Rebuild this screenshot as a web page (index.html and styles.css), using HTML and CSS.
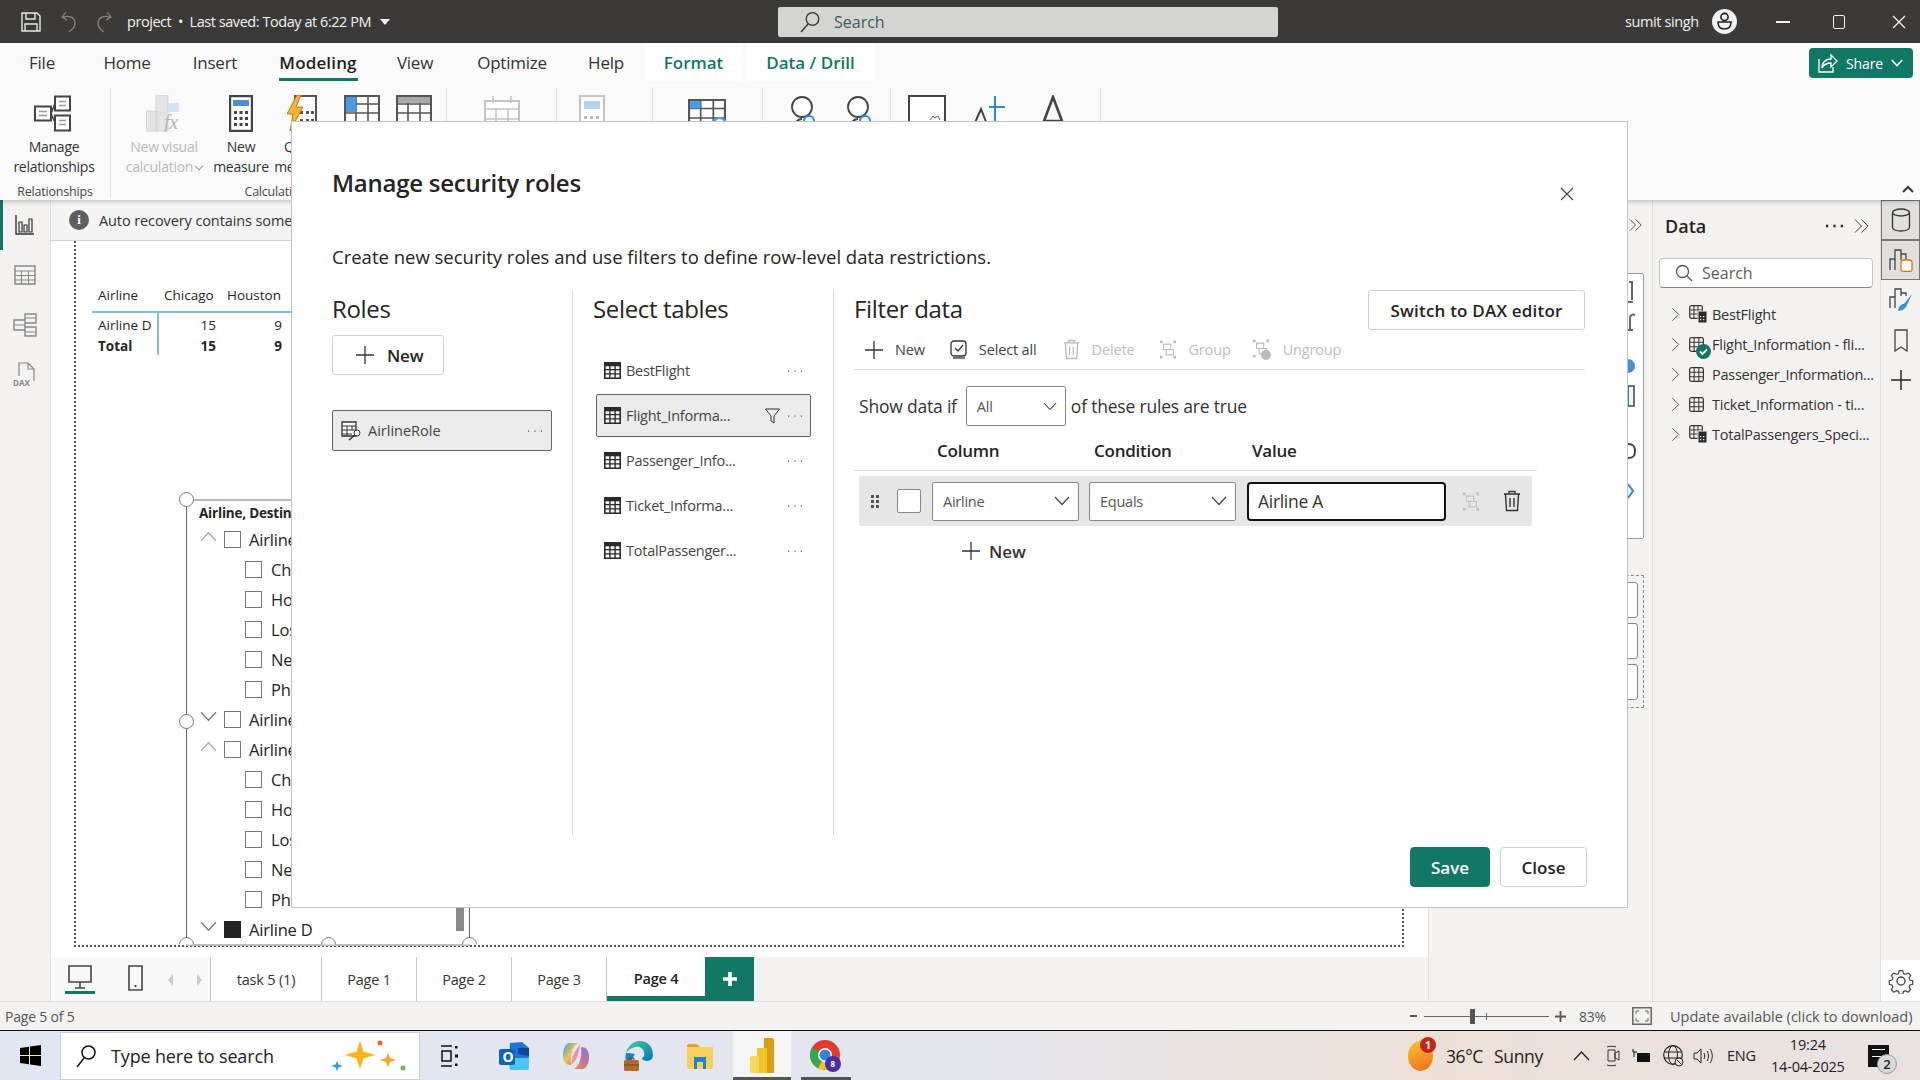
FILE: index.html
```html
<!DOCTYPE html>
<html>
<head lang="en">
    <meta charset="UTF-8">
    <title>project</title>
    <link rel="stylesheet" href="styles.css">
</head>
<body>
<svg class="defs" width="0" height="0">
    <symbol id="grid" viewBox="0 0 16 16"><path d="M0 0h16v16H0z" fill="#2b2b2b"/><path d="M1.500 4h3.400v2.600H1.500zM6.200 4h3.600v2.600H6.200zM11.100 4h3.400v2.600h-3.400zM1.500 7.800h3.400v2.800H1.500zM6.200 7.800h3.600v2.800H6.200zM11.100 7.800h3.400v2.800h-3.400zM1.500 11.800h3.400v2.700H1.500zM6.200 11.800h3.600v2.700H6.200zM11.100 11.800h3.400v2.700h-3.400z" fill="#f4f4f4"/></symbol>
    <symbol id="dots" viewBox="0 0 16 4"><path d="M1 1.500h1.200v1.200H1zM7.400 1.500h1.200v1.200H7.400zM13.800 1.500H15v1.200h-1.200z" fill="#555"/></symbol>
    <symbol id="dots2" viewBox="0 0 20 4"><path d="M1 .8h2.400v2.400H1zM8.800 .8h2.400v2.400H8.800zM16.600 .8H19v2.400h-2.400z" fill="#222"/></symbol>
    <symbol id="chev" viewBox="0 0 16 10"><path d="M1 1l7 7.500L15 1" fill="none" stroke="currentColor" stroke-width="1.200"/></symbol>
    <symbol id="chevr" viewBox="0 0 10 16"><path d="M1.500 1l7 7-7 7" fill="none" stroke="#444" stroke-width="1"/></symbol>
    <symbol id="plus" viewBox="0 0 20 20"><path d="M10 1v18M1 10h18" fill="none" stroke="currentColor" stroke-width="1.300"/></symbol>
    <symbol id="trash" viewBox="0 0 20 22"><path d="M2 4h16M7 4V1.500h6V4M3.500 4l1 16.500h11l1-16.500M8 8v9M12 8v9" fill="none" stroke="currentColor" stroke-width="1.400"/></symbol>
    <symbol id="group" viewBox="0 0 20 22"><path d="M1 1h3v3H1zM16 1h3v3h-3zM1 18h3v3H1zM16 18h3v3h-3z" fill="currentColor"/><path d="M5 5h8v6H5zM8 11h8v6H8z" fill="none" stroke="currentColor" stroke-width="1.200"/></symbol>
    <symbol id="tree" viewBox="0 0 16 16"><rect x=".7" y=".7" width="14.600" height="14.600" rx="2" fill="none" stroke="#333" stroke-width="1.300"/><path d="M5.500 1v14M10.500 1v14M1 5.500h14M1 10.500h14" stroke="#333" stroke-width="1.100"/></symbol>
    <symbol id="treecalc" viewBox="0 0 18 18"><rect x=".7" y=".7" width="12.600" height="12.600" rx="2" fill="none" stroke="#333" stroke-width="1.200"/><path d="M5 1v12M9 1v12M1 5h12M1 9h12" stroke="#333" stroke-width="1"/><rect x="9" y="6" width="9" height="12" fill="#2b2b2b" stroke="#f3f2f1"/><path d="M11 11h1.300v1.300H11zM14 11h1.300v1.300H14zM11 14h1.300v1.300H11zM14 14h1.300v1.300H14z" fill="#f3f2f1"/></symbol>
    <symbol id="double" viewBox="0 0 16 16"><path d="M1 1l7 7-7 7M8 1l7 7-7 7" fill="none" stroke="#333" stroke-width="1"/></symbol>
    <symbol id="tbl" viewBox="0 0 36 36"><path d="M1 1h34v34H1z" fill="#fff" stroke="#555" stroke-width="2"/><path d="M1 9h34M1 18h34M1 27h34M12 1v34M24 1v34" stroke="#555" stroke-width="1.600"/></symbol>
</svg>

<div class="app">
    <div class="titlebar">
        <div class="title-left">
            <svg class="save-ico" width="20" height="20" viewBox="0 0 20 20"><path d="M1 1h15l3 3v15H1z" fill="none" stroke="#e8e8e8" stroke-width="1.400"/><path d="M5 1v6h9V1M4 19v-7h12v7" fill="none" stroke="#e8e8e8" stroke-width="1.400"/></svg>
            <svg class="undo-ico" width="15" height="22" viewBox="0 0 15 22"><path d="M5 1L1 6l5 3M2 6c7-2 12 1 12 6 0 4-3 7-6 9" fill="none" stroke="#8a8987" stroke-width="1.200"/></svg>
            <svg class="redo-ico" width="15" height="22" viewBox="0 0 15 22"><path d="M10 1l4 5-5 3M13 6C6 4 1 7 1 12c0 4 3 7 6 9" fill="none" stroke="#8a8987" stroke-width="1.200"/></svg>
            <span class="doc-name">project &nbsp;•&nbsp; Last saved: Today at 6:22 PM</span>
            <span class="doc-caret"></span>
        </div>
        <div class="title-search">
            <svg width="20" height="22" viewBox="0 0 20 22"><circle cx="12.500" cy="8" r="6.300" fill="none" stroke="#333" stroke-width="1.300"/><path d="M8 13l-7 8" stroke="#333" stroke-width="1.400"/></svg>
            <span>Search</span>
        </div>
        <div class="title-right">
            <span class="user-name">sumit singh</span>
            <svg class="avatar" width="25" height="25" viewBox="0 0 25 25"><circle cx="12.500" cy="12.500" r="12.500" fill="#f2f2f2"/><circle cx="12.500" cy="8" r="3.600" fill="none" stroke="#222" stroke-width="1.600"/><path d="M6 13h13c0 5-3 7-6.500 7S6 18 6 13z" fill="none" stroke="#222" stroke-width="1.600"/></svg>
            <span class="win-min"></span>
            <span class="win-max"></span>
            <svg class="win-close" width="14" height="14" viewBox="0 0 14 14"><path d="M1 1l12 12M13 1L1 13" stroke="#f2f2f2" stroke-width="1.300"/></svg>
        </div>
    </div>

    <div class="ribbon">
        <div class="tabs">
            <span class="tab">File</span>
            <span class="tab">Home</span>
            <span class="tab">Insert</span>
            <span class="tab tab-on">Modeling</span>
            <span class="tab">View</span>
            <span class="tab">Optimize</span>
            <span class="tab">Help</span>
            <span class="tab tab-ctx tab-format">Format</span>
            <span class="tab tab-ctx">Data / Drill</span>
        </div>
        <button class="share">
            <svg width="22" height="22" viewBox="0 0 22 22"><path d="M3 7v13h14v-5" fill="none" stroke="#fff" stroke-width="1.300"/><path d="M6 16c0-6 4-9 9-9V3l6 6-6 6v-4c-4 0-7 1-9 5z" fill="none" stroke="#fff" stroke-width="1.300"/></svg>
            <span>Share</span>
            <svg class="share-chev" width="12" height="8" viewBox="0 0 16 10"><path d="M1 1l7 7.500L15 1" fill="none" stroke="#fff" stroke-width="2"/></svg>
        </button>
        <div class="groups">
            <div class="group group-rel">
                <div class="group-items">
                    <div class="rbtn">
                        <svg class="rico" width="40" height="36" viewBox="0 0 40 36"><path d="M21 1h15v14H21zM21 20h15v15H21zM1 11h16v14H1z" fill="#fff" stroke="#444" stroke-width="2"/><path d="M17 18L21 8M17 18l4 9" stroke="#444" stroke-width="1.600"/><path d="M25 6h7M25 10h7M25 25h7M25 29h7M5 16h8M5 20h8" stroke="#999" stroke-width="1.400"/></svg>
                        <span>Manage<br>relationships</span>
                    </div>
                </div>
                <div class="group-name">Relationships</div>
            </div>
            <div class="group group-calc">
                <div class="group-items">
                    <div class="rbtn rbtn-a off">
                        <svg class="rico" width="36" height="37" viewBox="0 0 36 37"><path d="M0 16h11v20H0zM10 0h12v36H10z" fill="#e4e4e4" stroke="#d4d4d4"/><path d="M22 8h11v9H22z" fill="#d2e3f4"/><text x="18" y="34" class="fx">fx</text></svg>
                        <span>New visual<br>calculation<i class="mini-caret"></i></span>
                    </div>
                    <div class="rbtn rbtn-b">
                        <svg class="rico" width="24" height="37" viewBox="0 0 24 37"><path d="M1 1h22v35H1z" fill="#fff" stroke="#444" stroke-width="2.400"/><path d="M4 5h16v6H4z" fill="#4a90d9"/><path d="M5 16h3v3H5zM10.500 16h3v3h-3zM16 16h3v3h-3zM5 22h3v3H5zM10.500 22h3v3h-3zM16 22h3v3h-3zM5 28h3v3H5zM10.500 28h3v3h-3zM16 28h3v3h-3z" fill="#444"/></svg>
                        <span>New<br>measure</span>
                    </div>
                    <div class="rbtn rbtn-c">
                        <svg class="rico" width="30" height="37" viewBox="0 0 30 37"><path d="M8 1h21v35H8z" fill="#fff" stroke="#555" stroke-width="2"/><path d="M13 16h3v3h-3zM19 16h3v3h-3zM24 16h3v3h-3zM13 24h3v3h-3zM19 24h3v3h-3zM24 24h3v3h-3z" fill="#555"/><path d="M10 0L0 19h6L3 36 16 12H9l5-12z" fill="#f5b335" stroke="#c9701a"/></svg>
                        <span>Quick<br>measure</span>
                    </div>
                    <svg class="rtable" width="36" height="36" viewBox="0 0 36 36"><use href="#tbl"/><path d="M2 2h10v15H2z" fill="#4a9be3"/></svg>
                    <svg class="rtable" width="36" height="36" viewBox="0 0 36 36"><use href="#tbl"/><path d="M2 2h32v6H2z" fill="#aaa"/></svg>
                </div>
                <div class="group-name">Calculations</div>
            </div>
            <div class="group group-date">
                <svg class="rico-g" width="36" height="46" viewBox="0 0 36 46"><path d="M1 6h34v38H1z" fill="#fff" stroke="#c4c4c4" stroke-width="2"/><path d="M1 14h34M1 24h34M1 34h34M12 14v30M24 14v30M9 1v7M27 1v7" stroke="#c4c4c4" stroke-width="1.600"/></svg>
            </div>
            <div class="group group-calcoff">
                <svg class="rico-g" width="26" height="46" viewBox="0 0 26 46"><path d="M1 1h24v44H1z" fill="#fff" stroke="#c4c4c4" stroke-width="2"/><path d="M5 6h16v8H5z" fill="#b5d2ee"/><path d="M5 21h3v3H5zM11 21h3v3h-3zM17 21h3v3h-3z" fill="#bbb"/></svg>
            </div>
            <div class="group group-rel2">
                <svg class="rico-g" width="38" height="46" viewBox="0 0 36 36"><use href="#tbl"/><path d="M2 2h10v7H2z" fill="#4a9be3"/><circle cx="30" cy="24" r="6" fill="#fff" stroke="#4a9be3" stroke-width="2"/></svg>
            </div>
            <div class="group group-people">
                <svg class="rico-g" width="26" height="46" viewBox="0 0 26 46"><circle cx="12" cy="12" r="10" fill="#fff" stroke="#444" stroke-width="1.800"/><path d="M2 36c2-8 6-12 10-12" fill="none" stroke="#444" stroke-width="1.800"/><circle cx="19" cy="26" r="5" fill="#fff" stroke="#2b88d8" stroke-width="2"/></svg>
                <svg class="rico-g" width="26" height="46" viewBox="0 0 26 46"><circle cx="12" cy="12" r="10" fill="#fff" stroke="#444" stroke-width="1.800"/><path d="M2 36c2-8 6-12 10-12" fill="none" stroke="#444" stroke-width="1.800"/><circle cx="19" cy="26" r="5" fill="#fff" stroke="#2b88d8" stroke-width="2"/></svg>
            </div>
            <div class="group group-last">
                <svg class="rico-g" width="38" height="46" viewBox="0 0 38 46"><path d="M1 1h36v28H1z" fill="#fff" stroke="#444" stroke-width="2"/><path d="M22 25l3-4 2 2 3-2 2 4" fill="none" stroke="#666"/></svg>
                <svg class="rico-g" width="36" height="46" viewBox="0 0 36 46"><path d="M2 32L10 14l7 18" fill="none" stroke="#444" stroke-width="2"/><path d="M24 1v40M18 12h16" fill="none" stroke="#2b88d8" stroke-width="2"/></svg>
                <svg class="rico-g" width="24" height="46" viewBox="0 0 24 46"><path d="M3 26L12 2l9 24zM3 26h18" fill="none" stroke="#444" stroke-width="2.600"/></svg>
            </div>
        </div>
        <svg class="collapse" width="12" height="8" viewBox="0 0 12 8"><path d="M1 7l5-5 5 5" fill="none" stroke="#333" stroke-width="2"/></svg>
    </div>

    <div class="main">
        <div class="nav">
            <div class="nav-item nav-on">
                <svg width="20" height="20" viewBox="0 0 20 20"><path d="M1 0v19h18" fill="none" stroke="#333" stroke-width="1.400"/><path d="M4 7h3v10H4zM9 10h3v7H9zM14 4h3v13h-3z" fill="none" stroke="#333" stroke-width="1.200"/></svg>
            </div>
            <div class="nav-item">
                <svg width="22" height="20" viewBox="0 0 22 20"><path d="M1 1h20v18H1z" fill="none" stroke="#888" stroke-width="1.400"/><path d="M1 6h20M1 10.500h20M1 15h20M7.500 6v13M14.500 6v13" stroke="#888"/></svg>
            </div>
            <div class="nav-item">
                <svg width="24" height="24" viewBox="0 0 24 24"><path d="M12 1h11v9H12zM1 7h11v10H1zM12 14h11v9H12z" fill="none" stroke="#888" stroke-width="1.400"/><path d="M1 12h11M12 5h11M12 19h11" stroke="#888"/></svg>
            </div>
            <div class="nav-item">
                <svg width="28" height="26" viewBox="0 0 28 26"><path d="M8 14V1h9l6 6v12M17 1v6h6" fill="none" stroke="#888" stroke-width="1.200"/><text x="2" y="24" class="dax">DAX</text></svg>
            </div>
        </div>

        <div class="center">
            <div class="infobar">
                <span class="info-dot">i</span>
                <span>Auto recovery contains some recovered files that haven't been opened.</span>
            </div>
            <div class="canvas">
                <div class="page-frame"></div>

                <div class="matrix">
                    <div class="m-head"><span class="m-first">Airline</span><span class="m-col">Chicago</span><span class="m-col">Houston</span></div>
                    <div class="m-body">
                        <div class="m-row"><span class="m-first">Airline D</span><span class="m-num">15</span><span class="m-num">9</span></div>
                        <div class="m-row m-total"><span class="m-first">Total</span><span class="m-num">15</span><span class="m-num">9</span></div>
                    </div>
                </div>

                <div class="slicer">
                    <i class="handle h-tl"></i><i class="handle h-ml"></i><i class="handle h-bot h-bl"></i><i class="handle h-bot h-bm"></i><i class="handle h-bot h-br"></i>
                    <i class="thumb"></i>
                    <div class="sl-title">Airline, Destination</div>
                    <div class="sl-row"><svg class="sl-chev up"><use href="#chev"/></svg><i class="box"></i><span>Airline A</span></div>
                    <div class="sl-row sub"><i class="box"></i><span>Chicago</span></div>
                    <div class="sl-row sub"><i class="box"></i><span>Houston</span></div>
                    <div class="sl-row sub"><i class="box"></i><span>Los Angeles</span></div>
                    <div class="sl-row sub"><i class="box"></i><span>New York</span></div>
                    <div class="sl-row sub"><i class="box"></i><span>Phoenix</span></div>
                    <div class="sl-row"><svg class="sl-chev"><use href="#chev"/></svg><i class="box"></i><span>Airline B</span></div>
                    <div class="sl-row"><svg class="sl-chev up"><use href="#chev"/></svg><i class="box"></i><span>Airline C</span></div>
                    <div class="sl-row sub"><i class="box"></i><span>Chicago</span></div>
                    <div class="sl-row sub"><i class="box"></i><span>Houston</span></div>
                    <div class="sl-row sub"><i class="box"></i><span>Los Angeles</span></div>
                    <div class="sl-row sub"><i class="box"></i><span>New York</span></div>
                    <div class="sl-row sub"><i class="box"></i><span>Phoenix</span></div>
                    <div class="sl-row"><svg class="sl-chev"><use href="#chev"/></svg><i class="box box-on"></i><span>Airline D</span></div>
                </div>
            </div>
            <div class="pagebar">
                <div class="view-btns">
                    <div class="view-btn view-on">
                        <svg width="24" height="24" viewBox="0 0 24 24"><path d="M1 1h22v16H1z" fill="none" stroke="#444" stroke-width="1.600"/><path d="M12 17v5M7 23h10" stroke="#444" stroke-width="1.600"/></svg>
                    </div>
                    <div class="view-btn">
                        <svg width="15" height="26" viewBox="0 0 15 26"><path d="M1 1h13v24H1z" fill="none" stroke="#444" stroke-width="1.600"/><path d="M6.500 20h2v2h-2z" fill="#444"/></svg>
                    </div>
                    <span class="pg-arrow pg-l"></span>
                    <span class="pg-arrow pg-r"></span>
                </div>
                <div class="ptab ptab-first">task 5 (1)</div>
                <div class="ptab">Page 1</div>
                <div class="ptab">Page 2</div>
                <div class="ptab">Page 3</div>
                <div class="ptab ptab-on">Page 4</div>
                <div class="ptab-add">
                    <svg width="16" height="16" viewBox="0 0 16 16"><path d="M8 1v14M1 8h14" stroke="#fff" stroke-width="3.600"/></svg>
                </div>
            </div>
        </div>

        <div class="viz">
            <svg class="viz-dbl" width="13" height="16"><use href="#double"/></svg>
            <div class="viz-card">
                <svg class="viz-bits" width="14" height="230" viewBox="0 0 14 230"><path d="M1 4h3v18M0 24h5M0 52h5M2 52V40c0-3 3-4 5-3" fill="none" stroke="#666" stroke-width="2"/><path d="M0 78a7 7 0 0 1 0 14z" fill="#4a90d9" transform="translate(0 3)"/><path d="M0 108h6v20H0z" fill="#dff" stroke="#444" stroke-width="1.500"/><path d="M0 166c6 0 7 3 7 7s-1 7-7 7" fill="none" stroke="#444" stroke-width="2"/><path d="M0 206l5 7-5 7" fill="none" stroke="#2b88d8" stroke-width="2"/></svg>
            </div>
            <div class="viz-wells">
                <div class="well"></div>
                <div class="well"></div>
                <div class="well"></div>
            </div>
        </div>

        <div class="data">
            <div class="data-head">
                <span class="data-title">Data</span>
                <svg class="data-dots" width="19" height="4"><use href="#dots2"/></svg>
                <svg width="15" height="16"><use href="#double"/></svg>
            </div>
            <div class="data-search">
                <svg width="18" height="18" viewBox="0 0 18 18"><circle cx="7.500" cy="7.500" r="6" fill="none" stroke="#555" stroke-width="1.300"/><path d="M12 12l5 5" stroke="#555" stroke-width="1.300"/></svg>
                <span>Search</span>
            </div>
            <div class="tree-row"><svg class="tree-chev"><use href="#chevr"/></svg><svg class="tree-ico"><use href="#treecalc"/></svg><span>BestFlight</span></div>
            <div class="tree-row"><svg class="tree-chev"><use href="#chevr"/></svg><span class="tree-wrap"><svg class="tree-ico small"><use href="#tree"/></svg><svg class="tree-badge" width="15" height="15" viewBox="0 0 15 15"><circle cx="7.500" cy="7.500" r="7.500" fill="#117865"/><path d="M4 7.500l2.500 2.500L11 5.500" fill="none" stroke="#fff" stroke-width="1.800"/></svg></span><span>Flight_Information - fli...</span></div>
            <div class="tree-row"><svg class="tree-chev"><use href="#chevr"/></svg><svg class="tree-ico small"><use href="#tree"/></svg><span>Passenger_Information...</span></div>
            <div class="tree-row"><svg class="tree-chev"><use href="#chevr"/></svg><svg class="tree-ico small"><use href="#tree"/></svg><span>Ticket_Information - ti...</span></div>
            <div class="tree-row"><svg class="tree-chev"><use href="#chevr"/></svg><svg class="tree-ico"><use href="#treecalc"/></svg><span>TotalPassengers_Speci...</span></div>
        </div>

        <div class="rail">
            <div class="rail-btn rail-on">
                <svg width="20" height="24" viewBox="0 0 20 24"><ellipse cx="10" cy="4.500" rx="8.500" ry="3.500" fill="none" stroke="#333" stroke-width="1.300"/><path d="M1.500 4.500v15c0 2 3.800 3.500 8.500 3.500s8.500-1.500 8.500-3.500v-15" fill="none" stroke="#333" stroke-width="1.300"/></svg>
            </div>
            <div class="rail-btn rail-on">
                <svg width="24" height="24" viewBox="0 0 24 24"><path d="M1 22V11h5v11M6 22V2h6v10M12 6h5v6" fill="none" stroke="#444" stroke-width="1.300"/><path d="M12 14c0-3 11-3 11 0v8c0 2-11 2-11 0z" fill="#fff" stroke="#d9730d" stroke-width="1.300"/></svg>
            </div>
            <div class="rail-btn">
                <svg width="24" height="24" viewBox="0 0 24 24"><path d="M1 20V9h5v11M6 20V1h6v7M12 5h5v3" fill="none" stroke="#444" stroke-width="1.300"/><path d="M9 23c1-5 3-7 6-7l8-10-5 11c-1 3-5 6-9 6z" fill="#3a8fd1"/></svg>
            </div>
            <div class="rail-btn">
                <svg width="14" height="23" viewBox="0 0 14 23"><path d="M1 1h12v21l-6-4-6 4z" fill="none" stroke="#444" stroke-width="1.300"/></svg>
            </div>
            <div class="rail-btn rail-plus">
                <svg width="22" height="22"><use href="#plus"/></svg>
            </div>
            <div class="rail-gear">
                <svg width="26" height="26" viewBox="0 0 26 26"><path d="M11 1.500h4l.7 3.200 2.400 1 2.800-1.700 2.800 2.800-1.700 2.800 1 2.400 3 .7v4l-3 .7-1 2.400 1.700 2.800-2.800 2.800-2.800-1.700-2.400 1-.7 3h-4l-.7-3-2.400-1-2.800 1.700-2.800-2.800 1.700-2.800-1-2.400-3-.7v-4l3-.7 1-2.400L2.300 6.800l2.800-2.800 2.800 1.700 2.400-1z" fill="none" stroke="#444" stroke-width="1.300" transform="translate(1.300 1.300) scale(.9)"/><circle cx="13" cy="13" r="4" fill="none" stroke="#444" stroke-width="1.300"/></svg>
            </div>
        </div>
    </div>

    <div class="statusbar">
        <span class="page-count">Page 5 of 5</span>
        <span class="zoom-minus"></span>
        <div class="zoom-track"><i class="zoom-tick"></i><i class="zoom-thumb"></i></div>
        <svg class="zoom-plus" width="11" height="11" viewBox="0 0 11 11"><path d="M5.500 0v11M0 5.500h11" stroke="#555" stroke-width="1.800"/></svg>
        <span class="zoom-val">83%</span>
        <svg class="fit" width="20" height="18" viewBox="0 0 20 18"><path d="M.8.800h18.400v16.400H.8z" fill="none" stroke="#666" stroke-width="1.500"/><path d="M4 7V4h3M13 4h3v3M4 11v3h3M16 11v3h-3" fill="none" stroke="#666"/></svg>
        <span class="update">Update available (click to download)</span>
    </div>

    <div class="taskbar">
        <svg class="win-logo" width="21" height="21" viewBox="0 0 21 21"><path d="M0 3l9-1.300V10H0zM10 1.500L21 0v10H10zM0 11h9v8.300L0 18zM10 11h11v10l-11-1.500z" fill="#000"/></svg>
        <div class="tb-search">
            <svg width="20" height="24" viewBox="0 0 20 24"><circle cx="12.500" cy="8.500" r="6.500" fill="none" stroke="#111" stroke-width="1.500"/><path d="M8 14l-7 9" stroke="#111" stroke-width="1.500"/></svg>
            <span>Type here to search</span>
            <svg class="sparkle" width="78" height="46" viewBox="0 0 78 46"><path d="M29 8l3.500 10.500L44 22l-11.500 3.500L29 36l-3.500-10.500L14 22l11.500-3.500z" fill="#f7b61e"/><path d="M57 20l2 5 6 2-6 2-2 5-2-5-6-2 6-2z" fill="#f5a623"/><path d="M6 28l1.500 3.500L12 33l-4.500 1.500L6 38l-1.500-3.500L0 33l4.500-1.500z" fill="#2a9fe0"/><circle cx="49" cy="10" r="2.500" fill="#e0662d"/><circle cx="72" cy="35" r="2.500" fill="#7cb342"/></svg>
        </div>
        <div class="tb-icons">
            <div class="tb-ico tb-view">
                <svg width="20" height="26" viewBox="0 0 20 26"><path d="M2 3h11M2 23h11M3 8h9v10H3z" fill="none" stroke="#111" stroke-width="1.500"/><path d="M16 3h2.500v2.500H16zM16 11.500h3v3h-3zM16 20.500h2.500V23H16z" fill="#111"/></svg>
            </div>
            <div class="tb-ico">
                <svg width="32" height="30" viewBox="0 0 32 30"><path d="M12 2l12-1 7 6v17H11z" fill="#1a76d2"/><path d="M20 7l11 0v8l-11-2z" fill="#0d47a1"/><path d="M10 17h21v10c0 1-1 2-2 2H12z" fill="#4fc3f7"/><rect x="1" y="8" width="16" height="16" rx="2" fill="#0f63b5"/><text x="4.500" y="21" class="ol">O</text></svg>
            </div>
            <div class="tb-ico">
                <svg width="30" height="30" viewBox="0 0 30 30"><defs><linearGradient id="cp" x1="0" y1="0" x2="1" y2="1"><stop offset="0" stop-color="#23a7e0"/><stop offset=".5" stop-color="#f0c44a"/><stop offset="1" stop-color="#e6477a"/></linearGradient><linearGradient id="cq" x1="1" y1="0" x2="0" y2="1"><stop offset="0" stop-color="#8c6bf0"/><stop offset="1" stop-color="#f08a3c"/></linearGradient></defs><path d="M8 2h9c-5 3-8 10-7 22-5 0-8-3-8-10C2 8 4 3 8 2z" fill="url(#cp)"/><path d="M22 28h-9c5-3 8-10 7-22 5 0 8 3 8 10 0 6-2 11-6 12z" fill="url(#cq)"/><path d="M10 24c1-7 3-14 9-20-1 8-3 16-9 20z" fill="#f06b8a" opacity=".7"/></svg>
            </div>
            <div class="tb-ico">
                <svg width="32" height="32" viewBox="0 0 32 32"><defs><linearGradient id="ed" x1="0" y1="0" x2="1" y2="1"><stop offset="0" stop-color="#3dd28b"/><stop offset="1" stop-color="#1172c4"/></linearGradient></defs><path d="M4 13C6 5 12 1 18 1c8 0 13 6 13 14 0 3-2 6-6 6-3 0-5-1-5-3 2-1 3-3 2-6-1-4-5-6-9-5-4 1-7 3-9 6z" fill="url(#ed)"/><path d="M4 13c-2 8 2 16 9 18-4-5-4-12 0-17-4-1-7-1-9-1z" fill="#1383d4"/><rect x="2" y="20" width="15" height="11" rx="1.500" fill="#b06a2c"/><path d="M7 20v-2h5v2M2 25h15" fill="none" stroke="#7a4516"/></svg>
            </div>
            <div class="tb-ico">
                <svg width="28" height="26" viewBox="0 0 28 26"><path d="M1 3c0-1 1-2 2-2h8l3 3H1z" fill="#e0a526"/><path d="M1 4h26v20c0 1-1 2-2 2H3c-1 0-2-1-2-2z" fill="#f7cf5a"/><path d="M8 14h12v12h-3v-7h-6v7H8z" fill="#1a86d0"/></svg>
            </div>
            <div class="tb-ico tb-on">
                <svg width="24" height="35" viewBox="0 0 24 35"><path d="M14 0h8c1 0 2 1 2 2v33H14z" fill="#d99f14"/><path d="M7 10h10v25H7z" fill="#f0c52c"/><path d="M0 20c0-1 1-2 2-2h7v17H2c-1 0-2-1-2-2z" fill="#f7d95e"/></svg>
            </div>
            <div class="tb-ico tb-open">
                <svg width="32" height="32" viewBox="0 0 32 32"><circle cx="15" cy="15" r="15" fill="#e33b2e"/><path d="M15 15L28 22.500A15 15 0 0 1 8 28z" fill="#f7c21c"/><path d="M15 15L8 28A15 15 0 0 1 2 7.500z" fill="#34a853"/><circle cx="15" cy="15" r="7" fill="#fff"/><circle cx="15" cy="15" r="5.500" fill="#3b82e0"/><circle cx="23" cy="24" r="8" fill="#4d2ea0"/><text x="20.500" y="27" class="cb">8</text></svg>
            </div>
        </div>
        <div class="tray">
            <span class="sun"><i class="sun-badge">1</i></span>
            <span class="temp">36°C</span>
            <span class="sky">Sunny</span>
            <svg class="tr-up" width="17" height="10" viewBox="0 0 17 10"><path d="M1 9l7.500-8L16 9" fill="none" stroke="#222" stroke-width="1.300"/></svg>
            <svg class="tr-cam" width="15" height="22" viewBox="0 0 15 22"><path d="M3 5h7v11H3zM10 8l4-2v9l-4-2zM2 2c2-1 7-1 9 0M2 20c2 1 7 1 9 0" fill="none" stroke="#333"/></svg>
            <svg class="tr-bat" width="19" height="16" viewBox="0 0 19 16"><path d="M5 5h13v9H5z" fill="#111"/><path d="M1 1v3h4M2 4v5" fill="none" stroke="#111"/></svg>
            <svg class="tr-globe" width="21" height="23" viewBox="0 0 21 23"><circle cx="10" cy="11" r="9.300" fill="none" stroke="#222" stroke-width="1.200"/><ellipse cx="10" cy="11" rx="4.500" ry="9.300" fill="none" stroke="#222"/><path d="M1 8h18M1 14h18" stroke="#222"/><circle cx="16" cy="18" r="4" fill="#e8e0da" stroke="#222"/><path d="M14 16l4 4" stroke="#222"/></svg>
            <svg class="tr-vol" width="21" height="18" viewBox="0 0 21 18"><path d="M1 6h3l4-4v14l-4-4H1z" fill="none" stroke="#222"/><path d="M11 6c1 2 1 4 0 6M14 4c2 3 2 7 0 10M17 2c3 4 3 10 0 14" fill="none" stroke="#222"/></svg>
            <span class="eng">ENG</span>
            <div class="clock"><span>19:24</span><span>14-04-2025</span></div>
            <span class="notify"><i class="notify-lines"></i><i class="notify-n">2</i></span>
        </div>
    </div>

    <div class="dialog">
        <svg class="dlg-x" width="14" height="14" viewBox="0 0 14 14"><path d="M1 1l12 12M13 1L1 13" stroke="#444" stroke-width="1.100"/></svg>
        <h1 class="dlg-title">Manage security roles</h1>
        <p class="dlg-desc">Create new security roles and use filters to define row-level data restrictions.</p>
        <div class="dlg-cols">
            <div class="col-roles">
                <h2 class="col-head">Roles</h2>
                <button class="btn btn-new">
                    <svg class="ico-dark" width="20" height="20"><use href="#plus"/></svg>
                    <span>New</span>
                </button>
                <div class="role-row">
                    <svg width="21" height="21" viewBox="0 0 21 21"><path d="M1 2h14v14H1z" fill="#fff" stroke="#333" stroke-width="1.300"/><path d="M1 6h14M1 10h14M1 14h10M6 6v10M11 6v4" stroke="#333"/><circle cx="16" cy="13" r="3" fill="#fff" stroke="#333"/><path d="M14 15l-6 5" stroke="#333" stroke-width="1.400"/></svg>
                    <span class="row-name">AirlineRole</span>
                    <svg class="row-dots" width="16" height="4"><use href="#dots"/></svg>
                </div>
            </div>
            <div class="col-tables">
                <h2 class="col-head">Select tables</h2>
                <div class="table-list">
                    <div class="table-row"><svg width="17" height="17"><use href="#grid"/></svg><span class="row-name">BestFlight</span><svg class="row-dots" width="16" height="4"><use href="#dots"/></svg></div>
                    <div class="table-row table-on"><svg width="17" height="17"><use href="#grid"/></svg><span class="row-name">Flight_Informa...</span><svg class="funnel" width="15" height="16" viewBox="0 0 15 16"><path d="M.5 1h14L9 8v7l-3-2V8z" fill="none" stroke="#333"/></svg><svg class="row-dots" width="16" height="4"><use href="#dots"/></svg></div>
                    <div class="table-row"><svg width="17" height="17"><use href="#grid"/></svg><span class="row-name">Passenger_Info...</span><svg class="row-dots" width="16" height="4"><use href="#dots"/></svg></div>
                    <div class="table-row"><svg width="17" height="17"><use href="#grid"/></svg><span class="row-name">Ticket_Informa...</span><svg class="row-dots" width="16" height="4"><use href="#dots"/></svg></div>
                    <div class="table-row"><svg width="17" height="17"><use href="#grid"/></svg><span class="row-name">TotalPassenger...</span><svg class="row-dots" width="16" height="4"><use href="#dots"/></svg></div>
                </div>
            </div>
            <div class="col-filter">
                <div class="filter-top">
                    <h2 class="col-head">Filter data</h2>
                    <button class="btn btn-dax">Switch to DAX editor</button>
                </div>
                <div class="toolbar">
                    <span class="tool"><svg class="ico-dark" width="20" height="20"><use href="#plus"/></svg>New</span>
                    <span class="tool"><svg width="18" height="21" viewBox="0 0 18 21"><rect x="1" y="2" width="15" height="15" rx="3" fill="none" stroke="#333" stroke-width="1.300"/><path d="M5 9l3 3 5-6" fill="none" stroke="#333" stroke-width="1.200"/><path d="M3 19h12" stroke="#333" stroke-width="1.300"/></svg>Select all</span>
                    <span class="tool off"><svg class="ico-off" width="19" height="21"><use href="#trash"/></svg>Delete</span>
                    <span class="tool off tool-group"><svg class="ico-off" width="18" height="21"><use href="#group"/></svg>Group</span>
                    <span class="tool off"><svg class="ico-off" width="20" height="23" viewBox="0 0 20 23"><use href="#group" width="18" height="21"/><circle cx="14" cy="17" r="5" fill="#bbb"/></svg>Ungroup</span>
                </div>
                <div class="show-line">
                    <span>Show data if</span>
                    <div class="select sel-all"><span>All</span><svg class="ico-mid" width="14" height="9"><use href="#chev"/></svg></div>
                    <span>of these rules are true</span>
                </div>
                <div class="rule-head">
                    <span class="rh-col">Column</span>
                    <span class="rh-cond">Condition</span>
                    <span>Value</span>
                </div>
                <div class="rule">
                    <svg class="grip" width="8" height="13" viewBox="0 0 8 13"><path d="M0 0h3v3H0zM5 0h3v3H5zM0 5h3v3H0zM5 5h3v3H5zM0 10h3v3H0zM5 10h3v3H5z" fill="#555"/></svg>
                    <i class="rule-check"></i>
                    <div class="select sel-rule"><span>Airline</span><svg class="ico-mid" width="16" height="10"><use href="#chev"/></svg></div>
                    <div class="select sel-rule"><span>Equals</span><svg class="ico-mid" width="16" height="10"><use href="#chev"/></svg></div>
                    <div class="value-box">Airline A</div>
                    <svg class="rule-group" width="18" height="21"><use href="#group"/></svg>
                    <svg class="rule-trash ico-dark" width="20" height="22"><use href="#trash"/></svg>
                </div>
                <div class="rule-new">
                    <svg class="ico-dark" width="20" height="20"><use href="#plus"/></svg>
                    <span>New</span>
                </div>
            </div>
        </div>
        <div class="dlg-foot">
            <button class="btn btn-save">Save</button>
            <button class="btn btn-close">Close</button>
        </div>
    </div>
</div>
</body>
</html>
```

FILE: styles.css
```css
*{
    margin: 0;
    padding: 0;
    box-sizing: border-box;
}
html,body{
    width: 1920px;
    height: 1080px;
    overflow: hidden;
}
body{
    font-family: "Open Sans", "Noto Sans", sans-serif;
    color: #252423;
    background: #fff;
}
button{
    font-family: inherit;
}
.defs{
    display: block;
    height: 0;
}
svg{
    display: block;
    flex: none;
}
.ico-dark{
    color: #333;
}
.ico-mid{
    color: #444;
}
.ico-off{
    color: #bbb;
}
.app{
    position: relative;
    width: 1920px;
    height: 1080px;
    display: flex;
    flex-direction: column;
}

/* title bar */
.titlebar{
    height: 43px;
    background: #3b3a38;
    display: flex;
    align-items: center;
    color: #f2f2f2;
    flex: none;
}
.title-left{
    width: 778px;
    display: flex;
    align-items: center;
    padding-left: 21px;
}
.undo-ico{
    margin-left: 20px;
}
.redo-ico{
    margin-left: 21px;
}
.doc-name{
    margin-left: 15px;
    font-size: 14.500px;
    letter-spacing: -0.45px;
    white-space: nowrap;
}
.doc-caret{
    margin-left: 9px;
    border-left: 5px solid transparent;
    border-right: 5px solid transparent;
    border-top: 6px solid #f2f2f2;
}
.title-search{
    width: 500px;
    height: 30px;
    background: #d4d4d2;
    border-radius: 2px;
    display: flex;
    align-items: center;
    padding-left: 22px;
    gap: 14px;
    color: #3f5a57;
    font-size: 16px;
}
.title-right{
    flex: 1;
    display: flex;
    align-items: center;
    padding-left: 347px;
}
.user-name{
    font-size: 14.500px;
    letter-spacing: -0.4px;
    width: 87px;
    white-space: nowrap;
}
.win-min{
    width: 14px;
    height: 2px;
    background: #f2f2f2;
    margin-left: 39px;
}
.win-max{
    width: 12px;
    height: 14px;
    border: 1.500px solid #f2f2f2;
    border-radius: 2px;
    margin-left: 43px;
}
.win-close{
    margin-left: 47px;
}

/* ribbon */
.ribbon{
    position: relative;
    height: 157px;
    background: #fafafa;
    flex: none;
    box-shadow: 0 2px 4px rgba(0,0,0,.18);
    z-index: 2;
}
.tabs{
    display: grid;
    grid-template-columns: 56px 114px 62px 144px 50px 144px 44px 119px 127px;
    padding-left: 14px;
    height: 38px;
}
.tab{
    display: flex;
    align-items: center;
    justify-content: center;
    font-size: 17px;
    letter-spacing: -0.25px;
    color: #333;
    white-space: nowrap;
}
.tab-on{
    font-weight: 600;
    color: #1f1f1f;
    letter-spacing: 0.15px;
    position: relative;
}
.tab-on::after{
    content: "";
    position: absolute;
    left: 33px;
    right: 32px;
    bottom: 0;
    height: 3px;
    background: #117865;
}
.tab-ctx{
    background: #fff;
    color: #117865;
    font-weight: 600;
    letter-spacing: 0;
}
.tab-format{
    margin-left: 17px;
    margin-right: 5px;
}
.share{
    position: absolute;
    top: 5px;
    left: 1809px;
    width: 104px;
    height: 30px;
    border: 0;
    border-radius: 4px;
    background: #117865;
    color: #fff;
    display: flex;
    align-items: center;
    padding-left: 7px;
    gap: 8px;
    font-size: 14px;
    letter-spacing: -0.1px;
}
.groups{
    display: flex;
    height: 118px;
    padding-top: 7px;
}
.group{
    height: 110px;
    border-right: 1px solid #e1e1e1;
    display: flex;
    flex: none;
}
.group-rel,.group-calc{
    flex-direction: column;
}
.group-items{
    flex: 1;
    display: flex;
    min-height: 0;
}
.group-name{
    height: 20px;
    line-height: 20px;
    margin-bottom: -4px;
    text-align: center;
    font-size: 12.500px;
    letter-spacing: -0.2px;
    color: #444;
}
.group-rel{
    width: 111px;
}
.group-rel .rbtn{
    width: 108px;
}
.group-calc{
    width: 336px;
}
.group-calc .group-items{
    padding-left: 14px;
}
.group-date{
    width: 110px;
    padding: 7px 0 0 37px;
}
.group-calcoff{
    width: 96px;
    padding: 7px 0 0 22px;
}
.group-rel2{
    width: 110px;
    padding: 7px 0 0 35px;
}
.group-people{
    width: 128px;
    padding: 7px 0 0 27px;
    gap: 30px;
}
.group-last{
    width: 210px;
    padding: 7px 0 0 17px;
    gap: 25px;
}
.group-last svg:last-child{
    margin-left: 9px;
}
.rbtn{
    display: flex;
    flex-direction: column;
    align-items: center;
    padding-top: 7px;
    font-size: 14px;
    line-height: 20px;
    letter-spacing: -0.25px;
    text-align: center;
    color: #333;
    white-space: nowrap;
}
.rbtn span{
    margin-top: 5px;
}
.rico{
    height: 37px;
}
.rbtn.off{
    color: #b9b9b9;
}
.rbtn-a{
    width: 78px;
}
.rbtn-b{
    width: 66px;
    margin-left: 5px;
}
.rbtn-c{
    width: 56px;
}
.rtable{
    margin-left: 14px;
    margin-top: 7px;
}
.rtable + .rtable{
    margin-left: 16px;
}
.rico-g{
    height: 46px;
}
.fx{
    font: italic 20px "Liberation Serif", serif;
    fill: #b5b5b5;
}
.mini-caret{
    display: inline-block;
    width: 6px;
    height: 6px;
    margin-left: 3px;
    border-right: 1.500px solid #999;
    border-bottom: 1.500px solid #999;
    transform: rotate(45deg) translate(-2px,-2px);
}
.collapse{
    position: absolute;
    left: 1902px;
    top: 142px;
}

/* main */
.main{
    height: 801px;
    flex: none;
    display: flex;
}
.nav{
    width: 51px;
    flex: none;
    background: #f3f2f1;
    border-right: 1px solid #e1dfdd;
}
.nav-item{
    height: 50px;
    display: flex;
    align-items: center;
    justify-content: center;
}
.nav-on{
    border-left: 3px solid #117865;
    padding-right: 3px;
}
.dax{
    font: bold 8px "Open Sans", sans-serif;
    fill: #888;
}
.center{
    width: 1377px;
    flex: none;
    display: flex;
    flex-direction: column;
}
.infobar{
    height: 41px;
    flex: none;
    background: #f4f4f4;
    border-bottom: 1px solid #d2d0ce;
    display: flex;
    align-items: center;
    padding-left: 18px;
    gap: 10px;
    font-size: 14.500px;
    letter-spacing: -0.1px;
    white-space: nowrap;
    overflow: hidden;
    color: #333;
}
.info-dot{
    width: 20px;
    height: 20px;
    border-radius: 50%;
    background: #605e5c;
    color: #fff;
    font: bold 13px/20px "Liberation Serif", serif;
    text-align: center;
}
.canvas{
    position: relative;
    flex: 1;
    background: #fff;
}
.page-frame{
    position: absolute;
    left: 23px;
    top: 0;
    width: 1330px;
    height: 706px;
    border-left: 2px dotted #555;
    border-right: 2px dotted #555;
    border-bottom: 2px dotted #555;
}

.matrix{
    position: absolute;
    left: 41px;
    top: 42px;
    width: 300px;
    font-size: 13.500px;
    color: #252423;
}
.m-head{
    height: 30px;
    padding-bottom: 5px;
    display: flex;
    align-items: center;
    border-bottom: 2px solid #7fbcf2;
}
.m-first{
    width: 66px;
    padding-left: 6px;
    white-space: nowrap;
}
.m-col{
    width: 63px;
    padding-left: 6px;
}
.m-body{
    padding-top: 1px;
    width: 300px;
    background: linear-gradient(#7fbcf2,#7fbcf2) 65px 0/2px 42px no-repeat;
}
.m-row{
    height: 21px;
    display: flex;
    align-items: center;
}
.m-num{
    width: 60px;
    text-align: right;
}
.m-first + .m-num{
    width: 58px;
}
.m-num + .m-num{
    width: 66px;
}
.m-total{
    font-weight: 700;
}

.slicer{
    position: absolute;
    left: 135px;
    top: 258px;
    width: 284px;
    height: 447px;
    border-left: 1px solid #666;
    border-top: 2px solid #bbb;
    border-bottom: 2px solid #bbb;
    border-right: 1px solid #666;
}
.handle{
    position: absolute;
    width: 15px;
    height: 15px;
    border: 1.500px solid #777;
    border-radius: 50%;
    background: #fff;
}
.h-tl{
    left: -8px;
    top: -9px;
}
.h-ml{
    left: -8px;
    top: 213px;
}
.h-bot{
    bottom: -8px;
    clip-path: inset(0 0 50% 0);
}
.h-bl{
    left: -8px;
}
.h-bm{
    left: 134px;
}
.h-br{
    right: -8px;
}
.thumb{
    position: absolute;
    right: 5px;
    top: 390px;
    width: 8px;
    height: 40px;
    background: #8a8a8a;
}
.sl-title{
    height: 23px;
    padding: 3px 0 0 12px;
    font-size: 13.500px;
    font-weight: 700;
    white-space: nowrap;
    letter-spacing: -0.2px;
}
.sl-row{
    height: 30px;
    display: flex;
    align-items: center;
    font-size: 16.500px;
    letter-spacing: -0.2px;
    padding-left: 37px;
    position: relative;
    white-space: nowrap;
}
.sl-row.sub{
    padding-left: 58px;
}
.sl-chev{
    position: absolute;
    left: 13px;
    top: 7px;
    width: 17px;
    height: 11px;
    color: #777;
}
.sl-chev.up{
    transform: rotate(180deg);
    color: #aaa;
}
.box{
    width: 17px;
    height: 17px;
    border: 1.500px solid #777;
    margin-right: 8px;
    flex: none;
}
.sub .box{
    margin-right: 9px;
}
.box-on{
    background: #252423;
    border-color: #252423;
}

/* pages */
.pagebar{
    height: 44px;
    flex: none;
    display: flex;
    background: #f3f2f1;
}
.view-btns{
    width: 160px;
    background: #f8f8f8;
    border-right: 1px solid #c8c6c4;
    display: flex;
    padding-left: 14px;
    position: relative;
}
.view-btn{
    width: 32px;
    padding: 8px 0 0 0;
    display: flex;
    justify-content: center;
}
.view-btn + .view-btn{
    margin-left: 24px;
}
.view-on{
    border-bottom: 3px solid #117865;
    height: 37px;
    width: 30px;
}
.pg-arrow{
    position: absolute;
    top: 17px;
    border-top: 6px solid transparent;
    border-bottom: 6px solid transparent;
}
.pg-l{
    left: 117px;
    border-right: 5px solid #ccc;
}
.pg-r{
    left: 146px;
    border-left: 5px solid #ccc;
}
.ptab{
    width: 95px;
    background: #fff;
    border-right: 1px solid #c8c6c4;
    display: flex;
    align-items: center;
    justify-content: center;
    font-size: 14.500px;
    letter-spacing: -0.2px;
    color: #333;
}
.ptab-first{
    width: 111px;
}
.ptab-on{
    width: 98px;
    border-right: 0;
    border-bottom: 5px solid #117865;
    font-weight: 600;
    color: #222;
    padding-top: 3px;
}
.ptab-add{
    width: 49px;
    background: #117865;
    display: flex;
    align-items: center;
    justify-content: center;
}

/* right panes */
.viz{
    width: 225px;
    flex: none;
    background: #f3f2f1;
    position: relative;
    border-left: 1px solid #e1dfdd;
    border-right: 1px solid #e1dfdd;
}
.viz-dbl{
    position: absolute;
    left: 200px;
    top: 17px;
}
.viz-card{
    position: absolute;
    left: 100px;
    top: 73px;
    width: 115px;
    height: 266px;
    background: #fff;
    border: 1px solid #999;
    border-radius: 2px;
}
.viz-bits{
    position: absolute;
    left: 98px;
    top: 4px;
}
.viz-wells{
    position: absolute;
    left: 100px;
    top: 375px;
    width: 115px;
    height: 133px;
    border: 1px dashed #888;
    padding-top: 6px;
}
.well{
    width: 108px;
    height: 36px;
    background: #fff;
    border: 1px solid #888;
    border-radius: 3px;
    margin-bottom: 5px;
}
.data{
    width: 227px;
    flex: none;
    background: #f3f2f1;
    padding: 0 6px;
}
.data-head{
    height: 58px;
    display: flex;
    align-items: center;
    padding: 0 5px 7px 6px;
}
.data-title{
    font-size: 18px;
    font-weight: 600;
    flex: 1;
}
.data-dots{
    margin-right: 10px;
}
.data-search{
    width: 214px;
    height: 30px;
    background: #fff;
    border: 1px solid #c8c6c4;
    border-bottom-color: #888;
    border-radius: 4px;
    display: flex;
    align-items: center;
    padding-left: 15px;
    gap: 9px;
    color: #605e5c;
    font-size: 16px;
    margin-bottom: 11px;
}
.tree-row{
    height: 30px;
    display: flex;
    align-items: center;
    font-size: 14.500px;
    letter-spacing: -0.25px;
    white-space: nowrap;
    color: #333;
    padding-left: 12px;
}
.tree-chev{
    width: 9px;
    height: 15px;
    margin-right: 9px;
}
.tree-ico{
    width: 18px;
    height: 18px;
    margin-right: 5px;
}
.tree-ico.small{
    width: 15px;
    height: 15px;
    margin-right: 8px;
}
.tree-wrap{
    position: relative;
    display: block;
}
.tree-badge{
    position: absolute;
    left: 7px;
    top: 7px;
}
.rail{
    width: 40px;
    flex: none;
    background: #f3f2f1;
    border-left: 1px solid #e1dfdd;
    position: relative;
}
.rail-btn{
    height: 40px;
    display: flex;
    align-items: center;
    justify-content: center;
}
.rail-on{
    background: #e1e0de;
    border: 1px solid #777;
}
.rail-plus{
    color: #222;
}
.rail-gear{
    position: absolute;
    left: 0;
    bottom: 0;
    width: 40px;
    height: 41px;
    background: #fff;
    display: flex;
    align-items: center;
    justify-content: center;
}

/* status */
.statusbar{
    height: 29px;
    flex: none;
    background: #f3f2f1;
    border-top: 1px solid #e1dfdd;
    display: flex;
    align-items: center;
    font-size: 14px;
    color: #555;
    padding-left: 5px;
}
.page-count{
    width: 1405px;
    letter-spacing: -0.2px;
}
.zoom-minus{
    width: 7px;
    height: 2px;
    background: #555;
}
.zoom-track{
    position: relative;
    width: 125px;
    height: 1px;
    background: #666;
    margin-left: 7px;
}
.zoom-thumb{
    position: absolute;
    left: 46px;
    top: -7px;
    width: 5px;
    height: 15px;
    background: #555;
}
.zoom-tick{
    position: absolute;
    left: 62px;
    top: -3px;
    width: 1px;
    height: 7px;
    background: #666;
}
.zoom-plus{
    margin-left: 6px;
}
.zoom-val{
    margin-left: 13px;
    width: 53px;
    letter-spacing: -0.2px;
}
.update{
    margin-left: 18px;
    white-space: nowrap;
    font-size: 14.500px;
    letter-spacing: 0;
}

/* taskbar */
.taskbar{
    height: 50px;
    flex: none;
    border-top: 1px solid #111;
    background: linear-gradient(90deg,#e1e6f1 0%,#e5e6ee 50%,#ece0d6 75%,#e8e2e2 100%);
    display: flex;
    align-items: center;
    padding-left: 20px;
}
.tb-search{
    width: 360px;
    height: 48px;
    margin-left: 19px;
    background: #fff;
    border: 1px solid #c9cdd6;
    display: flex;
    align-items: center;
    padding-left: 15px;
    gap: 15px;
    font-size: 18px;
    letter-spacing: -0.15px;
    color: #222;
    position: relative;
}
.sparkle{
    position: absolute;
    left: 270px;
    top: 0;
}
.tb-icons{
    display: flex;
    height: 49px;
}
.tb-ico{
    width: 62px;
    display: flex;
    align-items: center;
    justify-content: center;
    position: relative;
}
.tb-view{
    width: 58px;
}
.tb-view + .tb-ico{
    margin-left: 5px;
}
.tb-on{
    background: #f5f5f6;
    width: 58px;
    margin-left: 2px;
}
.tb-on::after,.tb-open::after{
    content: "";
    position: absolute;
    bottom: 0;
    left: 0;
    right: 0;
    height: 3px;
    background: #555;
}
.tb-open{
    margin-left: 4px;
    width: 62px;
}
.tb-open::after{
    left: 6px;
    right: 6px;
}
.tray{
    margin-left: auto;
    display: flex;
    align-items: center;
    height: 49px;
    position: relative;
    width: 512px;
    color: #222;
}
.sun{
    width: 25px;
    height: 30px;
    border-radius: 50%;
    background: linear-gradient(160deg,#f8c62f,#ef6c1c);
    position: relative;
}
.sun-badge{
    position: absolute;
    left: 12px;
    top: -4px;
    width: 16px;
    height: 16px;
    border-radius: 50%;
    background: #c4261d;
    color: #fff;
    font: 700 10.500px/16px "Open Sans", sans-serif;
    text-align: center;
}
.temp{
    margin-left: 13px;
    font-size: 17.500px;
    letter-spacing: -0.4px;
}
.sky{
    margin-left: 11px;
    font-size: 17.500px;
    letter-spacing: -0.3px;
    width: 71px;
}
.tr-up{
    margin-left: 8px;
}
.tr-cam{
    margin-left: 15px;
}
.tr-bat{
    margin-left: 12px;
}
.tr-globe{
    margin-left: 12px;
}
.tr-vol{
    margin-left: 9px;
}
.eng{
    margin-left: 13px;
    font-size: 14.500px;
    letter-spacing: -0.2px;
}
.clock{
    width: 82px;
    margin-left: 11px;
    display: flex;
    flex-direction: column;
    align-items: center;
    font-size: 14.500px;
    line-height: 22px;
    letter-spacing: -0.2px;
    white-space: nowrap;
}
.notify{
    position: relative;
    margin-left: 19px;
    width: 21px;
    height: 22px;
    background: #111;
}
.notify-lines{
    position: absolute;
    left: 4px;
    top: 4px;
    width: 13px;
    height: 8px;
    border-top: 1.500px solid #fff;
    border-bottom: 1.500px solid #fff;
}
.notify-n{
    position: absolute;
    left: 9px;
    top: 9px;
    width: 20px;
    height: 20px;
    border-radius: 50%;
    background: #d9d9d9;
    border: 1px solid #999;
    font: 600 13px/18px "Open Sans", sans-serif;
    color: #222;
    text-align: center;
}
.ol{
    font: 700 14px "Open Sans", sans-serif;
    fill: #fff;
}
.cb{
    font: 700 8px "Open Sans", sans-serif;
    fill: #fff;
}

/* dialog */
.dialog{
    position: absolute;
    left: 291px;
    top: 121px;
    width: 1337px;
    height: 787px;
    background: #fff;
    border: 1px solid #c4c4c4;
    padding: 0 40px;
    z-index: 5;
    display: flex;
    flex-direction: column;
}
.dlg-x{
    position: absolute;
    left: 1268px;
    top: 65px;
}
.dlg-title{
    font-size: 24px;
    font-weight: 600;
    letter-spacing: -0.25px;
    line-height: 32px;
    padding-top: 45px;
    height: 77px;
    color: #252423;
}
.dlg-desc{
    margin-top: 45px;
    font-size: 18.500px;
    letter-spacing: 0;
    line-height: 26px;
    color: #252423;
}
.dlg-cols{
    margin-top: 20px;
    height: 545px;
    display: flex;
}
.col-head{
    font-size: 24px;
    font-weight: 400;
    letter-spacing: -0.35px;
    line-height: 38px;
    color: #252423;
}
.col-roles{
    width: 241px;
    border-right: 1px solid #d9d9d9;
}
.btn{
    background: #fff;
    border: 1px solid #d2d0ce;
    border-radius: 3px;
    color: #252423;
    font-weight: 600;
}
.btn-new{
    width: 112px;
    height: 40px;
    margin-top: 7px;
    display: flex;
    align-items: center;
    padding-left: 22px;
    gap: 12px;
    font-size: 17px;
    letter-spacing: -0.2px;
}
.role-row{
    width: 220px;
    height: 41px;
    margin-top: 35px;
    background: #ebebeb;
    border: 1px solid #666;
    border-radius: 2px;
    display: flex;
    align-items: center;
    padding-left: 8px;
    gap: 6px;
    font-size: 14.500px;
    color: #444;
}
.row-name{
    flex: 1;
    white-space: nowrap;
}
.row-dots{
    margin-right: 8px;
}
.col-tables{
    width: 261px;
    border-right: 1px solid #d9d9d9;
    padding-left: 20px;
}
.table-list{
    margin: 20px 0 0 3px;
    width: 215px;
}
.table-row{
    height: 45px;
    width: 215px;
    display: flex;
    align-items: center;
    padding-left: 7px;
    gap: 5px;
    font-size: 14.500px;
    letter-spacing: -0.25px;
    color: #444;
    border: 1px solid transparent;
}
.table-on{
    height: 43px;
    margin: 1px 0;
    background: #ebebeb;
    border-color: #666;
    border-radius: 2px;
}
.funnel{
    margin-right: 2px;
}
.table-on .row-dots{
    margin-right: 6px;
}
.table-row .row-dots{
    margin-right: 7px;
}
.col-filter{
    flex: 1;
    padding: 0 2px 0 20px;
}
.filter-top{
    display: flex;
    justify-content: space-between;
    align-items: flex-start;
}
.btn-dax{
    width: 217px;
    height: 40px;
    font-size: 17px;
    letter-spacing: 0.2px;
}
.toolbar{
    display: flex;
    height: 40px;
    align-items: center;
    border-bottom: 1px solid #e1dfdd;
    padding-left: 10px;
    font-size: 14.500px;
    letter-spacing: -0.15px;
    color: #444;
}
.tool{
    display: flex;
    align-items: center;
    gap: 11px;
    margin-right: 25px;
}
.tool-group{
    margin-right: 21px;
}
.tool.off{
    color: #bdbdbd;
}
.show-line{
    display: flex;
    align-items: center;
    height: 40px;
    margin-top: 16px;
    padding-left: 5px;
    font-size: 17.500px;
    letter-spacing: -0.2px;
    gap: 5px;
    color: #333;
}
.select{
    background: #fff;
    border: 1px solid #888;
    border-radius: 2px;
    display: flex;
    align-items: center;
    justify-content: space-between;
    font-size: 14.500px;
    letter-spacing: -0.25px;
    color: #555;
    padding: 0 8px 0 10px;
}
.sel-all{
    width: 100px;
    height: 40px;
    margin: 0 0 0 4px;
}
.rule-head{
    display: flex;
    height: 45px;
    padding: 4px 0 0 83px;
    align-items: center;
    font-size: 17px;
    font-weight: 600;
    letter-spacing: -0.25px;
    border-bottom: 1px solid #e1dfdd;
    width: 683px;
    color: #252423;
}
.rh-col{
    width: 157px;
}
.rh-cond{
    width: 158px;
}
.rule{
    width: 673px;
    height: 50px;
    margin: 5px 0 0 5px;
    background: #e6e6e6;
    border-radius: 2px;
    display: flex;
    align-items: center;
    padding-left: 12px;
}
.rule-check{
    width: 24px;
    height: 24px;
    background: #fff;
    border: 1px solid #888;
    border-radius: 2px;
    margin-left: 18px;
}
.sel-rule{
    width: 147px;
    height: 39px;
    margin-left: 11px;
}
.sel-rule + .sel-rule{
    margin-left: 10px;
}
.value-box{
    width: 199px;
    height: 39px;
    margin-left: 11px;
    background: #fff;
    border: 2px solid #111;
    border-radius: 4px;
    display: flex;
    align-items: center;
    padding-left: 9px;
    font-size: 17.500px;
    letter-spacing: -0.3px;
    color: #333;
}
.rule-group{
    margin-left: 16px;
    color: #c0c0c0;
}
.rule-trash{
    margin-left: 22px;
}
.rule-new{
    display: flex;
    align-items: center;
    height: 40px;
    padding-left: 107px;
    gap: 8px;
    font-size: 17px;
    font-weight: 600;
    letter-spacing: 0;
    margin-top: 5px;
    color: #333;
}
.dlg-foot{
    display: flex;
    justify-content: flex-end;
    gap: 10px;
    margin-top: 12px;
}
.btn-save,.btn-close{
    height: 40px;
    font-size: 17px;
}
.btn-save{
    width: 80px;
    background: #117865;
    border-color: #117865;
    border-radius: 4px;
    color: #fff;
}
.btn-close{
    width: 87px;
    border-radius: 4px;
}
```
